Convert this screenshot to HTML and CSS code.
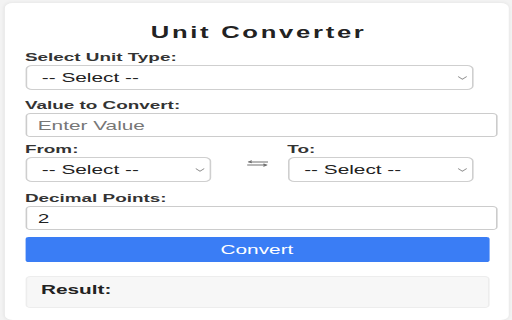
FILE: index.html
```html
<!DOCTYPE html>
<html lang="en">
<head>
<meta charset="utf-8">
<title>Unit Converter</title>
<link rel="stylesheet" href="styles.css">
</head>
<body>
<div class="app">
  <main class="card">
    <h1 class="title">Unit Converter</h1>

    <label class="label label-type">Select Unit Type:</label>
    <div class="select-wrap">
      <select class="select"><option>-- Select --</option></select>
      <svg class="chev" viewBox="0 0 6 4"><path d="M0.3 0.6 L3 3.2 L5.7 0.6" fill="none" stroke="#8a8a8a" stroke-width="0.7"/></svg>
    </div>

    <label class="label label-value">Value to Convert:</label>
    <input class="input" type="text" placeholder="Enter Value">

    <div class="fromto">
      <div class="col">
        <label class="label">From:</label>
        <div class="select-wrap small">
          <select class="select"><option>-- Select --</option></select>
          <svg class="chev" viewBox="0 0 6 4"><path d="M0.3 0.6 L3 3.2 L5.7 0.6" fill="none" stroke="#8a8a8a" stroke-width="0.7"/></svg>
        </div>
      </div>
      <div class="swap">
        <svg class="swap-icon" viewBox="0 0 14 7">
          <path d="M1 2 H13.5 M1 2 L3.4 0.6 M1 2 L3.4 3" fill="none" stroke="#707070" stroke-width="0.8"/>
          <path d="M0.5 5 H13 M13 5 L10.6 3.8 M13 5 L10.6 6.4" fill="none" stroke="#707070" stroke-width="0.8"/>
        </svg>
      </div>
      <div class="col">
        <label class="label">To:</label>
        <div class="select-wrap small">
          <select class="select"><option>-- Select --</option></select>
          <svg class="chev" viewBox="0 0 6 4"><path d="M0.3 0.6 L3 3.2 L5.7 0.6" fill="none" stroke="#8a8a8a" stroke-width="0.7"/></svg>
        </div>
      </div>
    </div>

    <label class="label label-decimal">Decimal Points:</label>
    <input class="input" type="number" value="2">

    <button class="btn" type="button">Convert</button>

    <div class="result"><span class="result-label">Result:</span></div>
  </main>
</div>
</body>
</html>
```
FILE: styles.css
```css
html, body {
  margin: 0;
  padding: 0;
}
body {
  background: #f3f3f3;
  overflow: hidden;
  font-family: "Liberation Sans", Arial, Helvetica, sans-serif;
  color: #222;
}
.app {
  width: 320px;
  height: 320px;
  box-sizing: border-box;
  padding: 3px 0 0 2.5px;
  transform: scaleX(1.6);
  transform-origin: 0 0;
}
.card {
  width: 315.5px;
  height: 317px;
  box-sizing: border-box;
  background: #fff;
  border-radius: 5px;
  box-shadow: 0 0 3px rgba(0, 0, 0, 0.08);
  padding: 20px 12px 0 13.1px;
}
.title {
  margin: 0;
  font-size: 16px;
  line-height: 20px;
  font-weight: bold;
  text-align: center;
  letter-spacing: 1.7px;
  padding-left: 1.7px;
  color: #222;
}
.label {
  display: block;
  font-size: 11.8px;
  line-height: 14px;
  font-weight: bold;
  color: #333;
  margin-bottom: 1px;
}
.label-type { margin-top: 7px; }
.label-value { margin-top: 8px; }
.label-decimal { margin-top: 9px; }

.select-wrap {
  position: relative;
  width: 280px;
}
.select-wrap.small { width: 116px; }
.select {
  display: block;
  width: 100%;
  height: 25px;
  box-sizing: border-box;
  margin: 0;
  padding: 0 0 0 9.5px;
  -webkit-appearance: none;
  appearance: none;
  background: #fff;
  border: 1px solid #cfcfcf;
  border-radius: 4px;
  font-family: "Liberation Sans", Arial, sans-serif;
  font-size: 13px;
  color: #222;
  outline: none;
}
.chev {
  position: absolute;
  right: 4px;
  top: 10.5px;
  width: 6px;
  height: 4px;
  pointer-events: none;
}
.input {
  display: block;
  width: 295px;
  height: 24px;
  box-sizing: border-box;
  margin: 0;
  padding: 0 7px;
  border: 1px solid #cccccc;
  border-radius: 3px;
  background: #fff;
  font-family: "Liberation Sans", Arial, sans-serif;
  font-size: 13px;
  color: #222;
  outline: none;
  -moz-appearance: textfield;
}
.input::placeholder { color: #777; }
.input::-webkit-outer-spin-button,
.input::-webkit-inner-spin-button {
  -webkit-appearance: none;
  margin: 0;
}
.fromto {
  display: grid;
  grid-template-columns: 116px 48px 116px;
  margin-top: 5px;
}
.swap {
  padding: 18px 0 0 22.5px;
}
.swap-icon {
  display: block;
  width: 14px;
  height: 7px;
}
.btn {
  display: block;
  width: 290px;
  height: 25px;
  margin: 7px 0 0 0;
  padding: 0;
  border: none;
  border-radius: 2px;
  background: #3a7df5;
  color: #fff;
  font-family: "Liberation Sans", Arial, sans-serif;
  font-size: 13px;
  line-height: 25px;
  cursor: pointer;
}
.result {
  margin-top: 14px;
  width: 290px;
  height: 32px;
  box-sizing: border-box;
  padding: 5px 9px;
  background: #f7f7f7;
  border: 1px solid #ededed;
  border-radius: 3px;
}
.result-label {
  display: block;
  font-size: 13px;
  line-height: 16px;
  font-weight: bold;
  color: #222;
}
```
